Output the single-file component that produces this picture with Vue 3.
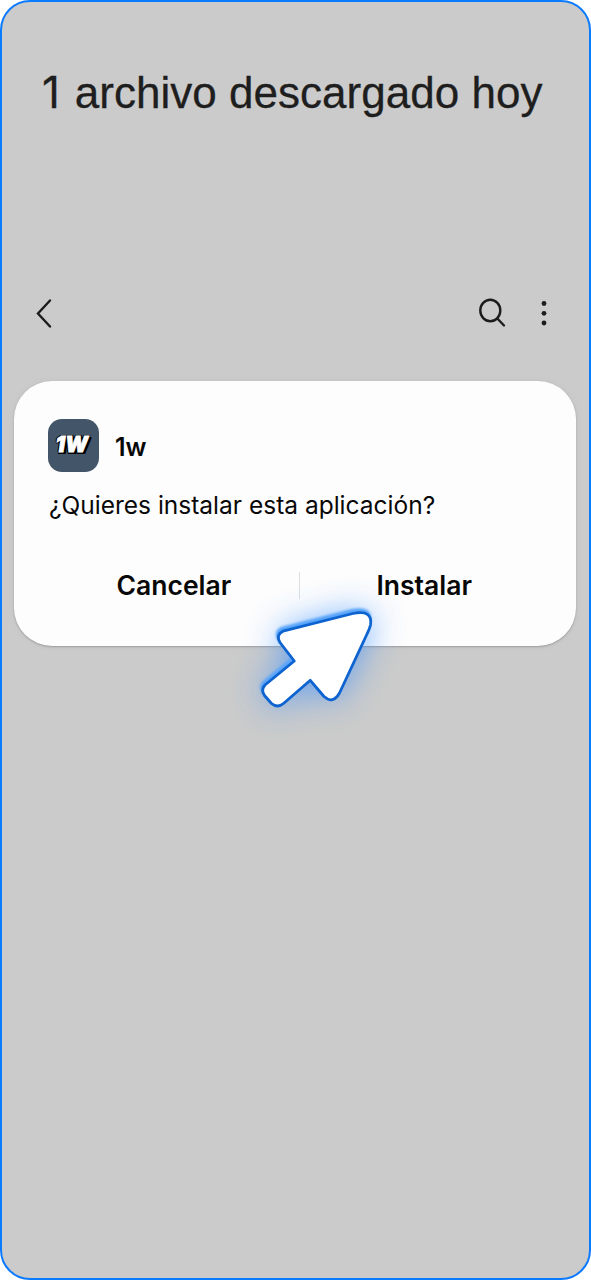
<script setup>
const question = '¿Quieres instalar esta aplicación?'
const arrow =
  'M283 631.2L353 613.5Q373 609.5 370.5 625Q369.5 629 367 634L339.5 693Q333 704.500 324 696.500L310.300 680.300L283.500 703.500Q277.500 708.500 271.500 703.500L264.500 695.500Q260.500 690 265 685L294.300 661L280 642.500Q275.500 635 283 631.200Z'
</script>

<template>
  <main class="phone">
    <h1 class="title"><span class="count">1</span> archivo descargado hoy</h1>
    <nav class="bar">
      <svg class="back" width="20" height="34" viewBox="0 0 20 34">
        <path d="M17 4.500L5 17.500L17 30.500" />
      </svg>
      <svg class="search" width="32" height="32" viewBox="0 0 32 32">
        <ellipse cx="13.300" cy="13.500" rx="10" ry="10.700" />
        <path d="M20.300 21.500L27 28.500" />
      </svg>
      <svg class="more" width="8" height="30" viewBox="0 0 8 30">
        <circle cx="4" cy="5.500" r="2.400" />
        <circle cx="4" cy="15.300" r="2.400" />
        <circle cx="4" cy="25" r="2.400" />
      </svg>
    </nav>
    <section class="dialog">
      <header class="app">
        <div class="logo">
          <span class="mark">1W</span>
        </div>
        <span class="name">1w</span>
      </header>
      <p class="question">{{ question }}</p>
      <div class="actions">
        <button class="cancel">Cancelar</button>
        <i class="divider"></i>
        <button class="install">Instalar</button>
      </div>
    </section>
    <svg class="pointer" width="591" height="1280" viewBox="0 0 591 1280">
      <defs>
        <filter id="glow" x="-60%" y="-60%" width="220%" height="220%">
          <feGaussianBlur stdDeviation="18" />
        </filter>
        <filter id="edge" x="-10%" y="-10%" width="120%" height="120%">
          <feGaussianBlur stdDeviation="0.800" />
        </filter>
      </defs>
      <path :d="arrow" fill="#3d91ff" opacity="0.800" filter="url(#glow)" />
      <path :d="arrow" class="rim" transform="translate(-1 -3)" filter="url(#edge)" />
      <path :d="arrow" class="body" />
    </svg>
  </main>
</template>

<style>
body { margin: 0; background: #fff; }
</style>

<style scoped>
.phone {
  box-sizing: border-box;
  position: relative;
  width: 591px;
  height: 1280px;
  border: 2px solid #0a7aff;
  border-radius: 30px;
  background: #cbcbcb;
  overflow: hidden;
  font-family: Inter, "Liberation Sans", sans-serif;
}
.title {
  margin: 62px 0 0 40px;
  height: 57px;
  font: 400 44px/56px "Liberation Sans", Arial, sans-serif;
  letter-spacing: 0.03px;
  color: #1e1e1e;
  -webkit-text-stroke: 0.3px #1e1e1e;
  white-space: nowrap;
}
.count {
  display: inline-block;
  width: 20.5px;
  font-family: Inter, sans-serif;
}
.bar {
  display: flex;
  align-items: center;
  height: 34px;
  margin: 175px 41px 0 31px;
}
.bar svg { fill: none; stroke: #1c1c1c; stroke-width: 2.4; stroke-linecap: round; }
.bar .search { margin-left: auto; }
.bar .more { margin-left: 31px; fill: #1c1c1c; stroke: none; }
.dialog {
  box-sizing: border-box;
  width: 562px;
  height: 265px;
  margin: 51px 0 0 12px;
  padding: 37px 0 0 34px;
  border-radius: 38px;
  background: #fdfdfd;
  box-shadow: 0 1px 2px rgba(0, 0, 0, 0.22), 0 0 8px rgba(0, 0, 0, 0.04);
  color: #080808;
}
.app { display: flex; align-items: center; height: 54px; }
.logo {
  display: flex;
  flex: none;
  align-items: center;
  justify-content: center;
  box-sizing: border-box;
  width: 51px;
  height: 53px;
  border-radius: 14px;
  background: #425569;
}
.mark {
  font: italic 900 21px/24px Inter, sans-serif;
  letter-spacing: 0.3px;
  color: #fff;
  -webkit-text-stroke: 0.8px #fff;
  text-shadow: -1.5px 0 #000, 0 -1.5px #000, -1px -1px #000, -1px 1.5px #000,
    1.5px -1px #000, 1.5px 1.5px #000, 2.5px 1px #000, 2.5px 2px #000;
  transform: translate(-1.5px, 0);
}
.name { margin-left: 16px; padding-top: 3px; font-size: 25px; font-weight: 600; line-height: 32px; }
.question {
  margin: 17px 0 0 1px;
  font-size: 24.5px;
  line-height: 32px;
  white-space: nowrap;
}
.actions { display: flex; align-items: center; height: 32px; margin-top: 48px; }
button {
  border: 0;
  padding: 0;
  background: none;
  color: inherit;
  font: 600 26.5px/32px Inter, sans-serif;
  text-align: left;
}
.cancel { width: 115px; margin-left: 68.5px; }
.divider { width: 1px; height: 27px; margin-left: 67.5px; background: #dedee2; }
.install { margin-left: 76.5px; }
.pointer { position: absolute; left: -2px; top: -2px; pointer-events: none; }
.rim { fill: #58a4fb; stroke: #58a4fb; stroke-width: 3px; }
.body { fill: #fff; stroke: #0d63cf; stroke-width: 2.8px; stroke-linejoin: round; }
</style>
